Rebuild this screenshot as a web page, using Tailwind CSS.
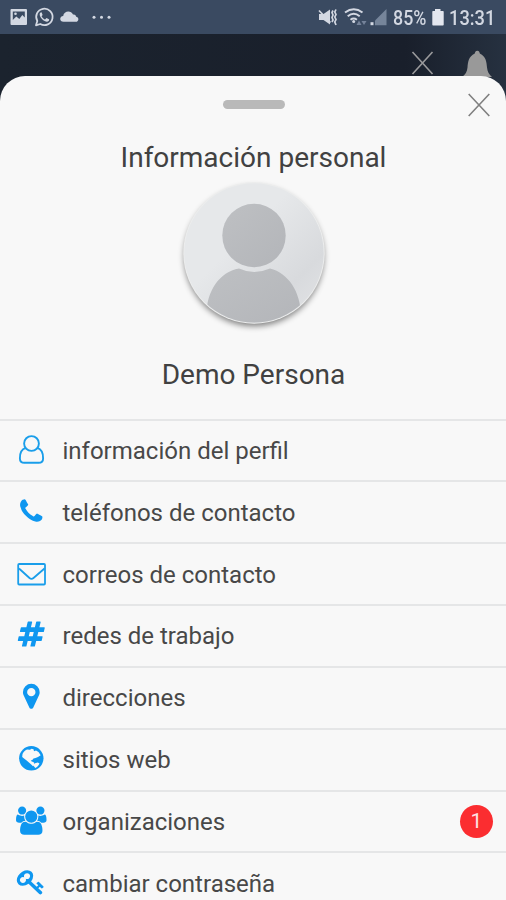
<!DOCTYPE html>
<html lang="es">
<head>
<meta charset="utf-8">
<meta name="viewport" content="width=device-width, initial-scale=1">
<title>Información personal</title>
<script src="https://cdn.jsdelivr.net/npm/@tailwindcss/browser@4"></script>
</head>
<body class="h-[900px] w-[506px] overflow-hidden bg-[#1b212c] font-['Roboto','Noto_Sans',sans-serif] text-[#414141]">
<div class="flex h-[900px] flex-col overflow-hidden">
  <!-- Status bar -->
  <header class="flex h-[34px] shrink-0 items-center justify-between bg-[#3a4a61] text-[#d3d8e2]">
    <svg class="h-[34px] w-[120px]" viewBox="0 0 120 34" fill="none">
      <path fill="#d3d8e2" fill-rule="evenodd" d="M11.500 9h14.500q1 0 1 1v14q0 1-1 1h-14.500q-1 0-1-1v-14q0-1 1-1zM12.800 11.500v8.500l3.500-3.500 3 2.500 3-4 2.500 2.500v-6z"/>
      <circle cx="15.500" cy="13.700" r="1.300" fill="#d3d8e2"/>
      <path d="M36 25.300l1.300-4.300a8.200 8.200 0 1 1 3 3z" stroke="#d3d8e2" stroke-width="1.800" stroke-linejoin="round"/>
      <path fill="#d3d8e2" d="M41 12.300c-2 1-1.500 3.300 0 5.500s4 4.200 6.200 3.900c1.700-.3 2.200-1.500 1.800-2.400l-2.500-1.300-1.500 1.400c-1.500-.5-2.900-2-3.400-3.200l1-1.300-.9-2.400z"/>
      <path fill="#d3d8e2" d="M63.500 21.800c-4.300 0-4.300-5.600-.3-5.800.5-5.500 8-6.200 9.800-1.500 2.200-.3 3 .9 3.100 2.200 3.200.5 3 5.100-.3 5.100z"/>
      <g fill="#d3d8e2"><circle cx="94" cy="17.300" r="1.500"/><circle cx="101.500" cy="17.300" r="1.500"/><circle cx="109" cy="17.300" r="1.500"/></g>
    </svg>
    <div class="flex items-center pr-[11px]">
      <svg class="h-[34px] w-[76px]" viewBox="316 0 76 34" fill="none">
        <path fill="#d3d8e2" d="M319 14h4.500l6.500-4.500v15l-6.500-4.500h-4.500z"/>
        <path d="M319 10.500l11.500 12" stroke="#d3d8e2" stroke-width="1.700"/>
        <path d="M333 10.500l-1 2 1 2.500-1 2.500 1 2.500-1 2M336 9.500l-1.200 2.500 1.200 2.500-1.200 2.500 1.200 2.500-1.200 2.500 1.200 3" stroke="#d3d8e2" stroke-width="1.700"/>
        <path d="M345 12.500q8.800-6.500 17.500 0M347.700 16.200q6-4.800 12 0M350.500 19.700q3.200-2.500 6.400 0" stroke="#d3d8e2" stroke-width="2"/>
        <circle cx="353.700" cy="21.600" r="1.500" fill="#d3d8e2"/>
        <path fill="#75839a" d="M356.500 25l2.500-4.500 2.500 4.500zM361.500 21h5l-2.500 4z"/>
        <path fill="#76859a" d="M386.500 9v16.200h-11.500v-4.700z"/>
        <path fill="#d3d8e2" d="M370.500 25.200v-3h3v3z"/>
      </svg>
      <span class="ml-[1px] h-[32px] w-[34px] origin-left scale-x-[.85] text-[21px] leading-[34px] font-medium whitespace-nowrap">85%</span>
      <svg class="ml-[5px] h-[34px] w-[12px]" viewBox="432 0 12 34"><path fill="#e3e6ee" d="M435 9h5.500v2h2.500q.7 0 .7.700v13q0 .8-.8.800h-9.800q-.8 0-.8-.8v-13q0-.7.700-.7h2z"/></svg>
      <span class="ml-[5px] h-[32px] w-[46px] origin-left scale-x-[.87] text-[21px] leading-[34px] font-medium whitespace-nowrap">13:31</span>
    </div>
  </header>

  <!-- Dimmed app bar behind the sheet -->
  <div class="flex h-[66px] shrink-0 justify-end bg-linear-to-r from-[#1b232e] via-[#191f2b] via-80% to-[#263140]">
    <svg class="h-[66px] w-[106px]" viewBox="400 34 106 66" fill="none">
      <path d="M412.500 52l20 22M432.500 52l-20 22" stroke="#9a9a9c" stroke-width="1.600"/>
      <path fill="#999999" d="M462 77c3.500-2.500 5-5 5.500-9.500.4-5.500 1-11 7.300-14 0-1 .7-2.800 2.500-2.800s2.500 1.800 2.500 2.800c6.200 3 6.800 8.500 7.200 14 .5 4.500 2 7 5 9.500z"/>
    </svg>
  </div>

  <!-- Bottom sheet -->
  <main class="relative -mt-[24px] h-[824px] shrink-0 overflow-hidden rounded-t-[25px] bg-[#f8f8f8]">
    <div class="flex h-[342.500px] flex-col items-center pl-[1px]">
      <div class="mt-[24px] h-[8.500px] w-[62px] shrink-0 rounded-full bg-[#b9b9b9]"></div>
      <button class="absolute top-[17px] right-[16px]" aria-label="Cerrar">
        <svg class="h-[24px] w-[22px]" viewBox="0 0 22 24" fill="none"><path d="M.7 1l20.600 22M21.300 1L.7 23" stroke="#808080" stroke-width="1.600"/></svg>
      </button>
      <h1 class="mt-[33px] h-[32px] shrink-0 text-[28px] leading-[32px] whitespace-nowrap">Información personal</h1>
      <svg class="-mt-[1px] h-[160px] w-[160px] shrink-0" viewBox="0 0 160 160">
        <defs>
          <linearGradient id="disc" x1="0" y1="0" x2="1" y2="1"><stop offset=".4" stop-color="#e6e8ea"/><stop offset=".75" stop-color="#d8dadd"/><stop offset="1" stop-color="#e4e5e7"/></linearGradient>
          <linearGradient id="person" x1="0" y1="0" x2="1" y2="1"><stop offset="0" stop-color="#bec0c3"/><stop offset="1" stop-color="#b3b5b9"/></linearGradient>
          <clipPath id="round"><circle cx="80" cy="80" r="69.500"/></clipPath>
          <filter id="shade" x="-20%" y="-20%" width="140%" height="140%"><feGaussianBlur stdDeviation="3"/></filter>
        </defs>
        <circle cx="80" cy="83.500" r="69.500" fill="#000" opacity=".5" filter="url(#shade)"/>
        <circle cx="80" cy="80" r="70.700" fill="#eceded"/>
        <circle cx="80" cy="80" r="69.700" fill="url(#disc)"/>
        <g clip-path="url(#round)" fill="url(#person)">
          <circle cx="80" cy="62.500" r="31.700"/>
          <path d="M32.500 142c0-24 13-43 32.500-46.500q15 7 31 0C114.500 100 126.500 119 127 142v12h-94z"/>
        </g>
      </svg>
      <h2 class="mt-[26px] h-[32px] shrink-0 text-[28px] leading-[32px] whitespace-nowrap">Demo Persona</h2>
    </div>

    <ul class="w-full text-[24px] text-[#484848]">
      <li class="flex h-[61.850px] items-center border-t-2 border-[#e5e6e7] pt-[1px]">
        <svg class="mr-[13.500px] ml-[13px] size-[36px]" viewBox="0 0 36 36" fill="none" stroke="#1a9eea" stroke-width="1.900"><circle cx="18.500" cy="10.500" r="7.400"/><path d="M12.700 14.900C8.500 16.200 6.800 21 6.900 25.500c0 3 2 4.300 4.500 4.300h14.200c2.500 0 4.500-1.300 4.500-4.300C30.200 21 28.500 16.200 24.300 14.900"/></svg>
        <span>información del perfil</span>
      </li>
      <li class="flex h-[61.850px] items-center border-t-2 border-[#e5e6e7] pt-[1px]">
        <svg class="mr-[13.500px] ml-[13px] size-[36px]" viewBox="0 0 36 36" fill="#0f97f0"><path transform="translate(4 2.300) scale(.0159)" d="M1600 1240q0 27-10 70.500t-21 68.500q-21 50-122 106-94 51-186 51-27 0-53-3.500t-57.500-12.500-47-14.500-55.500-20.500-49-18q-98-35-175-83-127-79-264-216t-216-264q-48-77-83-175-3-9-18-49t-20.500-55.500-14.500-47-12.500-57.500-3.500-53q0-92 51-186 56-101 106-122 25-11 68.500-21t70.500-10q14 0 21 3 18 6 53 76 11 19 30 54t35 63.500 31 53.500q3 4 17.500 25t21.500 35.500 7 28.500q0 20-28.500 50t-62 55-62 53-28.500 46q0 9 5 22.500t8.500 20.500 14 24 11.500 19q76 137 174 235t235 174q2 1 19 11.500t24 14 20.500 8.500 22.500 5q18 0 46-28.500t53-62 55-62 50-28.500q14 0 28.500 7t35.500 21.500 25 17.500q25 15 53.500 31t63.500 35 54 30q70 35 76 53 3 7 3 21z"/></svg>
        <span>teléfonos de contacto</span>
      </li>
      <li class="flex h-[61.850px] items-center border-t-2 border-[#e5e6e7] pt-[1px]">
        <svg class="mr-[13.500px] ml-[13px] size-[36px]" viewBox="0 0 36 36" fill="none" stroke="#1a9eea" stroke-width="1.800"><rect x="5.200" y="7" width="26.800" height="20.500" rx="1"/><path d="M6 11.500l10.500 9.500q2 1.700 4 0l11-9.500"/></svg>
        <span>correos de contacto</span>
      </li>
      <li class="flex h-[61.850px] items-center border-t-2 border-[#e5e6e7] pt-[1px]">
        <svg class="mr-[13.500px] ml-[13px] size-[36px]" viewBox="0 0 36 36" fill="#0f97f0"><path transform="translate(4.300 1.500) scale(.0156 .0163)" d="M991 1024l64-256h-254l-64 256h254zm768-504l-56 224q-7 24-31 24h-327l-64 256h311q15 0 25 12 10 14 6 28l-56 224q-5 24-31 24h-327l-81 328q-7 24-31 24h-224q-16 0-26-12-9-12-6-28l78-312h-254l-81 328q-7 24-31 24h-225q-15 0-25-12-9-12-6-28l78-312h-311q-15 0-25-12-9-12-6-28l56-224q7-24 31-24h327l64-256h-311q-15 0-25-12-10-14-6-28l56-224q5-24 31-24h327l81-328q7-24 32-24h224q15 0 25 12 9 12 6 28l-78 312h254l81-328q7-24 32-24h224q15 0 25 12 9 12 6 28l-78 312h311q15 0 25 12 9 12 6 28z"/></svg>
        <span>redes de trabajo</span>
      </li>
      <li class="flex h-[61.850px] items-center border-t-2 border-[#e5e6e7] pt-[1px]">
        <svg class="mr-[13.500px] ml-[13px] size-[36px]" viewBox="0 0 36 36" fill="#0f97f0"><path transform="translate(3.700 1.700) scale(.0163)" d="M1152 640q0-106-75-181t-181-75-181 75-75 181 75 181 181 75 181-75 75-181zm256 0q0 109-33 179l-364 774q-16 33-47.500 52t-67.500 19-67.500-19-46.500-52l-365-774q-33-70-33-179 0-212 150-362t362-150 362 150 150 362z"/></svg>
        <span>direcciones</span>
      </li>
      <li class="flex h-[61.850px] items-center border-t-2 border-[#e5e6e7] pt-[1px]">
        <svg class="mr-[13.500px] ml-[13px] size-[36px]" viewBox="0 0 36 36"><circle cx="18.300" cy="16.300" r="12.200" fill="#0f97f0"/><path fill="#f8f8f8" d="M9.500 12c1-2.300 2.500-4 4.500-4.600l3 .3 1.500-.9 2 .4.500 2 2-.7 2.500 1.500 2.200 3.300-2.700 1.800-2.500 1-2 .3-1.200 1.500-1.500.5.900 1.200 1.600.3 1 1.200.2 1.800-1.500 1.300-1.500-1.500-1.700-1.500-2-1.800-1.800-1.500-2.300-1.600-1.500-1.400zM20.700 24l1.300-2.800 2.800-.8 1.700 1c-1 2.200-2.300 3.600-4.200 4.600z"/></svg>
        <span>sitios web</span>
      </li>
      <li class="flex h-[61.850px] items-center border-t-2 border-[#e5e6e7] pt-[1px]">
        <svg class="mr-[13.500px] ml-[13px] size-[36px]" viewBox="0 0 36 36" fill="#0f97f0"><path transform="translate(3 2.500) scale(.0159 .0158)" d="M593 896q-162 5-265 128h-134q-82 0-138-40.500t-56-118.500q0-353 124-353 6 0 43.500 21t97.500 42.500 119 21.500q67 0 133-23-5 37-5 66 0 139 81 256zm1071 637q0 120-73 189.500t-194 69.500h-874q-121 0-194-69.500t-73-189.500q0-53 3.500-103.500t14-109 26.500-108.500 43-97.500 62-81 85.500-53.500 111.500-20q10 0 43 21.500t73 48 107 48 135 21.500 135-21.500 107-48 73-48 43-21.500q61 0 111.500 20t85.500 53.500 62 81 43 97.500 26.500 108.500 14 109 3.500 103.500zm-1024-1277q0 106-75 181t-181 75-181-75-75-181 75-181 181-75 181 75 75 181zm704 384q0 159-112.500 271.500t-271.500 112.500-271.500-112.500-112.500-271.500 112.500-271.500 271.500-112.500 271.500 112.500 112.500 271.500zm576 225q0 78-56 118.500t-138 40.500h-134q-103-123-265-128 81-117 81-256 0-29-5-66 66 23 133 23 59 0 119-21.500t97.500-42.500 43.500-21q124 0 124 353zm-128-609q0 106-75 181t-181 75-181-75-75-181 75-181 181-75 181 75 75 181z"/></svg>
        <span>organizaciones</span>
        <span class="mr-[13px] ml-auto flex size-[33px] items-center justify-center rounded-full bg-[#fb2d30] text-[21px] leading-none text-[#fbe3e3]">1</span>
      </li>
      <li class="flex h-[61.850px] items-center border-t-2 border-[#e5e6e7] pt-[1px]">
        <svg class="mr-[13.500px] ml-[13px] size-[36px]" viewBox="0 0 36 36" fill="#0f97f0"><path transform="translate(3.800 2.300) scale(.0160 .0152)" d="M832 512q0-80-56-136t-136-56-136 56-56 136q0 42 19 83-41-19-83-19-80 0-136 56t-56 136 56 136 136 56 136-56 56-136q0-42-19-83 41 19 83 19 80 0 136-56t56-136zm851 704q0 17-49 66t-66 49q-9 0-28.500-16t-36.500-33-38.500-40-24.500-26l-96 96 220 220q28 28 28 68 0 42-39 81t-81 39q-40 0-68-28l-671-671q-176 131-365 131-163 0-265.500-102.500t-102.500-265.500q0-160 95-313t248-248 313-95q163 0 265.500 102.500t102.500 265.500q0 189-131 365l355 355 96-96q-3-3-26-24.500t-40-38.500-33-36.500-16-28.500q0-17 49-66t66-49q13 0 23 10 6 6 46 44.500t82 79.500 86.500 86 73 78 28.500 41z"/></svg>
        <span>cambiar contraseña</span>
      </li>
    </ul>
  </main>
</div>
</body>
</html>
